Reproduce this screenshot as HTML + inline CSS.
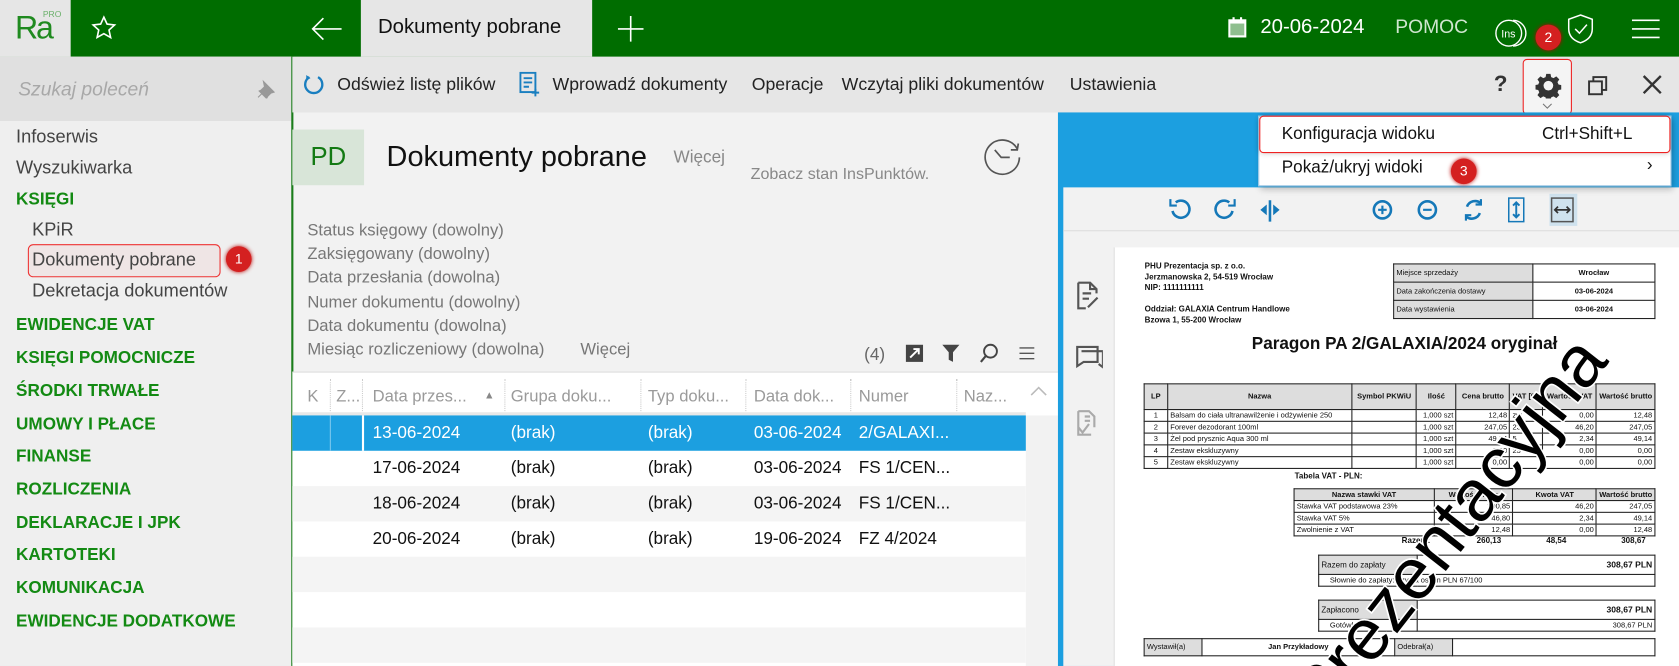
<!DOCTYPE html>
<html><head><meta charset="utf-8">
<style>
*{box-sizing:border-box;margin:0;padding:0}
html,body{width:1679px;height:666px;overflow:hidden;background:#fff}
body{font-family:"Liberation Sans","DejaVu Sans",sans-serif}
#w{position:absolute;left:0;top:0;width:1568px;height:622px;transform:scale(1.0708,1.0707);transform-origin:0 0;overflow:hidden;background:#f2f2f2}
.a{position:absolute;white-space:nowrap}
.g{color:#138a13;font-weight:bold;font-size:16px}
.s{font-size:17px;color:#444}
.tb{font-size:16.5px;color:#222}
.f{font-size:15.5px;color:#777}
.h{font-size:15.5px;color:#9a9a9a}
.r{font-size:16px;color:#111}
.d{font-size:7.5px;color:#111}
.badge{position:absolute;width:24px;height:24px;border-radius:50%;background:#d42020;color:#fff;font-size:13px;text-align:center;line-height:24px;box-shadow:0 0 4px #b00}
table.t{position:absolute;border-collapse:collapse;font-size:7px;color:#111}
table.t td{border:1px solid #222;padding:0 2px;height:11px}
table.t .hd td{background:#ddd;font-weight:bold;text-align:center}
</style></head><body><div id="w">
<!-- top bar -->
<div class="a" style="left:0;top:0;width:1568px;height:53px;background:#006d00"></div>
<div class="a" style="left:0;top:0;width:66px;height:53px;background:#e6e6e6"></div>
<div class="a" style="left:14px;top:10px;font-size:30px;color:#1f8a1f;letter-spacing:-2px">Ra</div>
<div class="a" style="left:40px;top:9px;font-size:8px;color:#6ab06a">PRO</div>
<svg class="a" style="left:85px;top:14px" width="24" height="24" viewBox="0 0 24 24"><path d="M12 2l3 6.5 7 .8-5.2 4.8 1.5 7L12 17.5 5.7 21l1.5-7L2 9.3l7-.8z" fill="none" stroke="#fff" stroke-width="1.5"/></svg>
<svg class="a" style="left:290px;top:16px" width="30" height="22"><path d="M2 11h27M12 1L2 11l10 10" fill="none" stroke="#fff" stroke-width="1.5"/></svg>
<div class="a" style="left:337px;top:0;width:216px;height:53px;background:#e6e6e6"></div>
<div class="a" style="left:353px;top:15px;font-size:19px;color:#111">Dokumenty pobrane</div>
<svg class="a" style="left:577px;top:15px" width="24" height="24"><path d="M12 0v24M0 12h24" stroke="#fff" stroke-width="1.5"/></svg>
<svg class="a" style="left:1147px;top:16px" width="17" height="19"><rect x="0" y="2" width="17" height="17" fill="#fff"/><rect x="2" y="6" width="13" height="11" fill="#8fbf8f"/><rect x="4" y="0" width="2" height="4" fill="#fff"/><rect x="11" y="0" width="2" height="4" fill="#fff"/></svg>
<div class="a" style="left:1177px;top:15px;font-size:19px;color:#fff">20-06-2024</div>
<div class="a" style="left:1303px;top:15px;font-size:18px;color:#cfe6cf">POMOC</div>
<svg class="a" style="left:1395px;top:16px" width="32" height="30"><circle cx="14" cy="15" r="12" fill="none" stroke="#fff" stroke-width="1.3"/><path d="M18 3a12 12 0 0 1 0 24" fill="none" stroke="#fff" stroke-width="1.3"/><text x="7" y="19" font-size="10" fill="#fff" font-family="Liberation Sans">Ins</text></svg>
<svg class="a" style="left:1463px;top:12px" width="26" height="30"><path d="M13 2l11 4v9c0 7-5 11-11 13C7 26 2 22 2 15V6z" fill="none" stroke="#fff" stroke-width="1.4"/><path d="M8 15l4 4 7-8" fill="none" stroke="#fff" stroke-width="1.4"/></svg>
<svg class="a" style="left:1524px;top:17px" width="26" height="20"><path d="M0 2h26M0 10h26M0 18h26" stroke="#fff" stroke-width="1.5"/></svg>
<div class="badge" style="left:1434px;top:23px">2</div>
<!-- sidebar -->
<div class="a" style="left:0;top:53px;width:272px;height:569px;background:#efefef"></div>
<div class="a" style="left:0;top:53px;width:272px;height:60px;background:#e0e0e0"></div>
<div class="a" style="left:17px;top:73px;font-size:18px;color:#a8a8a8;font-style:italic">Szukaj poleceń</div>
<svg class="a" style="left:240px;top:74px" width="18" height="18"><path d="M6 2l10 10-3 1-3 3-1 2L2 11l2-1 3-3zM5 13l-4 4" fill="#999" stroke="#999" stroke-width="1"/></svg>
<div class="a s" style="left:15px;top:118px">Infoserwis</div>
<div class="a s" style="left:15px;top:147px">Wyszukiwarka</div>
<div class="a g" style="left:15px;top:178px">KSIĘGI</div>
<div class="a s" style="left:30px;top:205px">KPiR</div>
<div class="a" style="left:26px;top:228px;width:180px;height:31px;border:1.5px solid #e33;border-radius:5px;background:rgba(240,200,200,.25)"></div>
<div class="a s" style="left:30px;top:233px">Dokumenty pobrane</div>
<div class="badge" style="left:211px;top:230px">1</div>
<div class="a s" style="left:30px;top:262px">Dekretacja dokumentów</div>
<div class="a g" style="left:15px;top:295px">EWIDENCJE VAT</div>
<div class="a g" style="left:15px;top:326px">KSIĘGI POMOCNICZE</div>
<div class="a g" style="left:15px;top:357px">ŚRODKI TRWAŁE</div>
<div class="a g" style="left:15px;top:388px">UMOWY I PŁACE</div>
<div class="a g" style="left:15px;top:418px">FINANSE</div>
<div class="a g" style="left:15px;top:449px">ROZLICZENIA</div>
<div class="a g" style="left:15px;top:480px">DEKLARACJE I JPK</div>
<div class="a g" style="left:15px;top:510px">KARTOTEKI</div>
<div class="a g" style="left:15px;top:541px">KOMUNIKACJA</div>
<div class="a g" style="left:15px;top:572px">EWIDENCJE DODATKOWE</div>
<div class="a" style="left:272px;top:53px;width:1.5px;height:569px;background:#1b7d1b"></div>
<!-- toolbar -->
<div class="a" style="left:273px;top:53px;width:1295px;height:52px;background:#e6e6e6"></div>
<svg class="a" style="left:283px;top:68px" width="20" height="22"><path d="M6 4A8 8 0 1 0 14 4" fill="none" stroke="#1a7fc0" stroke-width="2.2"/><path d="M3 2l4 3-4 2z" fill="#1a7fc0"/></svg>
<div class="a tb" style="left:315px;top:70px">Odśwież listę plików</div>
<svg class="a" style="left:485px;top:67px" width="20" height="24"><rect x="1" y="1" width="14" height="18" fill="none" stroke="#1a7fc0" stroke-width="1.8"/><path d="M4 6h8M4 10h8M4 14h5M15 16v7M11.5 19.5h7" stroke="#1a7fc0" stroke-width="1.8"/></svg>
<div class="a tb" style="left:516px;top:70px">Wprowadź dokumenty</div>
<div class="a tb" style="left:702px;top:70px">Operacje</div>
<div class="a tb" style="left:786px;top:70px">Wczytaj pliki dokumentów</div>
<div class="a tb" style="left:999px;top:70px">Ustawienia</div>
<div class="a" style="left:1395px;top:67px;font-size:21px;color:#333;font-weight:bold">?</div>
<div class="a" style="left:1422px;top:55px;width:46px;height:52px;border:1.5px solid #e22;border-radius:4px;background:#f4f4f4"></div>
<svg class="a" style="left:1434px;top:68px" width="24" height="24" viewBox="0 0 24 24"><path d="M10 1h4l.6 3 2.2 1 2.6-1.7 2.8 2.8-1.7 2.6 1 2.2 3 .6v4l-3 .6-1 2.2 1.7 2.6-2.8 2.8-2.6-1.7-2.2 1-.6 3h-4l-.6-3-2.2-1-2.6 1.7-2.8-2.8 1.7-2.6-1-2.2-3-.6v-4l3-.6 1-2.2-1.7-2.6 2.8-2.8 2.6 1.7 2.2-1z" fill="#333"/><circle cx="12" cy="12" r="4.5" fill="#f4f4f4"/></svg>
<svg class="a" style="left:1440px;top:96px" width="10" height="6"><path d="M1 1l4 4 4-4" fill="none" stroke="#777"/></svg>
<svg class="a" style="left:1482px;top:70px" width="20" height="20"><rect x="6" y="2" width="12" height="12" fill="none" stroke="#333" stroke-width="1.8"/><rect x="2" y="6" width="12" height="12" fill="#e6e6e6" stroke="#333" stroke-width="1.8"/></svg>
<svg class="a" style="left:1534px;top:70px" width="18" height="18"><path d="M1 1l16 16M17 1L1 17" stroke="#333" stroke-width="2.2"/></svg>
<!-- left panel header -->
<div class="a" style="left:273px;top:121px;width:67px;height:52px;background:#d8e5d8"></div>
<div class="a" style="left:290px;top:133px;font-size:24px;color:#137a13">PD</div>
<div class="a" style="left:361px;top:131px;font-size:27px;color:#111">Dokumenty pobrane</div>
<div class="a" style="left:629px;top:139px;font-size:16px;color:#888">Więcej</div>
<div class="a" style="left:701px;top:154px;font-size:15px;color:#888">Zobacz stan InsPunktów.</div>
<svg class="a" style="left:916px;top:127px" width="40" height="40"><path d="M34 12A16 16 0 1 0 36 20" fill="none" stroke="#555" stroke-width="1.6"/><path d="M28 13l6 0 1-6" fill="none" stroke="#555" stroke-width="1.6"/><path d="M13 13l6 7h8" fill="none" stroke="#555" stroke-width="1.6"/></svg>
<div class="a f" style="left:287px;top:207px">Status księgowy (dowolny)</div>
<div class="a f" style="left:287px;top:229px">Zaksięgowany (dowolny)</div>
<div class="a f" style="left:287px;top:251px">Data przesłania (dowolna)</div>
<div class="a f" style="left:287px;top:274px">Numer dokumentu (dowolny)</div>
<div class="a f" style="left:287px;top:296px">Data dokumentu (dowolna)</div>
<div class="a f" style="left:287px;top:318px">Miesiąc rozliczeniowy (dowolna)</div>
<div class="a f" style="left:542px;top:318px">Więcej</div>
<div class="a" style="left:807px;top:323px;font-size:16px;color:#666">(4)</div>
<svg class="a" style="left:845px;top:321px" width="18" height="18"><rect x="1" y="1" width="16" height="16" fill="#444"/><path d="M5 13l8-8M8 5h5v5" stroke="#fff" stroke-width="1.8" fill="none"/></svg>
<svg class="a" style="left:879px;top:321px" width="18" height="18"><path d="M1 1h16l-6 7v9l-4-2V8z" fill="#444"/></svg>
<svg class="a" style="left:914px;top:320px" width="20" height="20"><circle cx="11" cy="8" r="6" fill="none" stroke="#444" stroke-width="1.8"/><path d="M7 12l-5 6" stroke="#444" stroke-width="2"/></svg>
<svg class="a" style="left:952px;top:324px" width="14" height="12"><path d="M0 1h14M0 6h14M0 11h14" stroke="#555" stroke-width="1.3"/></svg>
<!-- grid -->
<div class="a" style="left:273px;top:347px;width:715px;height:275px;background:#fff;border-top:1px solid #ddd"></div>
<div class="a" style="left:273px;top:385px;width:685px;height:3px;background:#e8e8e8"></div>
<div class="a h" style="left:287px;top:362px">K</div>
<div class="a h" style="left:314px;top:362px">Z...</div>
<div class="a h" style="left:348px;top:362px">Data przes...</div>
<div class="a" style="left:452px;top:364px;font-size:10px;color:#888">▲</div>
<div class="a h" style="left:477px;top:362px">Grupa doku...</div>
<div class="a h" style="left:605px;top:362px">Typ doku...</div>
<div class="a h" style="left:704px;top:362px">Data dok...</div>
<div class="a h" style="left:802px;top:362px">Numer</div>
<div class="a h" style="left:900px;top:362px">Naz...</div>
<svg class="a" style="left:962px;top:360px" width="16" height="10"><path d="M1 9l7-7 7 7" fill="none" stroke="#bbb" stroke-width="1.5"/></svg>
<div class="a" style="left:308px;top:354px;height:30px;border-left:1px dotted #ccc"></div>
<div class="a" style="left:338px;top:354px;height:30px;border-left:1px dotted #ccc"></div>
<div class="a" style="left:471px;top:354px;height:30px;border-left:1px dotted #ccc"></div>
<div class="a" style="left:598px;top:354px;height:30px;border-left:1px dotted #ccc"></div>
<div class="a" style="left:696px;top:354px;height:30px;border-left:1px dotted #ccc"></div>
<div class="a" style="left:794px;top:354px;height:30px;border-left:1px dotted #ccc"></div>
<div class="a" style="left:893px;top:354px;height:30px;border-left:1px dotted #ccc"></div>
<div class="a" style="left:958px;top:388px;width:30px;height:234px;background:#f2f2f2"></div>
<div class="a" style="left:273px;top:388px;width:685px;height:33px;background:#1c9fe0"></div>
<div class="a" style="left:308px;top:388px;width:1px;height:33px;background:#7cc8ee"></div>
<div class="a" style="left:338px;top:388px;width:1.5px;height:33px;background:#fff"></div>
<div class="a" style="left:273px;top:454px;width:685px;height:33px;background:#f4f4f4"></div>
<div class="a" style="left:273px;top:520px;width:685px;height:33px;background:#f4f4f4"></div>
<div class="a" style="left:273px;top:586px;width:685px;height:33px;background:#f4f4f4"></div>
<div class="a r" style="left:348px;top:396px;color:#fff">13-06-2024</div>
<div class="a r" style="left:477px;top:396px;color:#fff">(brak)</div>
<div class="a r" style="left:605px;top:396px;color:#fff">(brak)</div>
<div class="a r" style="left:704px;top:396px;color:#fff">03-06-2024</div>
<div class="a r" style="left:802px;top:396px;color:#fff">2/GALAXI...</div>
<div class="a r" style="left:348px;top:429px">17-06-2024</div><div class="a r" style="left:477px;top:429px">(brak)</div><div class="a r" style="left:605px;top:429px">(brak)</div><div class="a r" style="left:704px;top:429px">03-06-2024</div><div class="a r" style="left:802px;top:429px">FS 1/CEN...</div>
<div class="a r" style="left:348px;top:462px">18-06-2024</div><div class="a r" style="left:477px;top:462px">(brak)</div><div class="a r" style="left:605px;top:462px">(brak)</div><div class="a r" style="left:704px;top:462px">03-06-2024</div><div class="a r" style="left:802px;top:462px">FS 1/CEN...</div>
<div class="a r" style="left:348px;top:495px">20-06-2024</div><div class="a r" style="left:477px;top:495px">(brak)</div><div class="a r" style="left:605px;top:495px">(brak)</div><div class="a r" style="left:704px;top:495px">19-06-2024</div><div class="a r" style="left:802px;top:495px">FZ 4/2024</div>
<!-- right panel -->
<div class="a" style="left:988px;top:105px;width:580px;height:517px;background:#1c9fe0"></div>
<div class="a" style="left:993px;top:175px;width:575px;height:447px;background:#f2f2f2"></div>
<div class="a" style="left:993px;top:215px;width:575px;height:1px;background:#ddd"></div>
<div class="a" style="left:1447px;top:181px;width:26px;height:30px;background:#cfe2ee"></div>
<svg class="a" style="left:1090px;top:183px" width="390" height="26" viewBox="0 0 390 26" fill="none" stroke="#1578b8" stroke-width="2.4">
<path d="M8 6a8 8 0 1 1-3 8"/><path d="M3 3v6h6" stroke-width="2"/>
<path d="M58 6a8 8 0 1 0 3 8"/><path d="M63 3v6h-6" stroke-width="2"/>
<path d="M96 4v20" stroke-width="2.4"/><path d="M93 8l-6 5 6 5z M99 8l6 5-6 5z" fill="#1578b8" stroke="none"/>
<circle cx="201" cy="13" r="8"/><path d="M197 13h8M201 9v8" stroke-width="2"/>
<circle cx="243" cy="13" r="8"/><path d="M239 13h8" stroke-width="2"/>
<path d="M293 7a8 8 0 0 0-13 3M279 19a8 8 0 0 0 13-3"/><path d="M293 3v5h-5M279 23v-5h5" stroke-width="2"/>
<rect x="319" y="2" width="14" height="22" stroke-width="1.4"/><path d="M326 6v14M323 9l3-3 3 3M323 17l3 3 3-3" stroke-width="1.8"/>
<rect x="359" y="2" width="20" height="22" stroke="#555" stroke-width="1.4"/><path d="M362 13h14M365 10l-3 3 3 3M373 10l3 3-3 3" stroke="#333" stroke-width="1.6"/>
</svg>
<svg class="a" style="left:1004px;top:262px" width="26" height="150" fill="none" stroke="#555" stroke-width="2">
<path d="M3 2h11l6 6v4M3 2v24h7M14 2v6h6M7 12h8M7 17h6M12 25l9-9"/>
<path d="M2 62h19v14H8l-6 4zM6 66h20v15l-4-3" />
<path d="M3 122h10l5 5v10M3 122v22h12M3 137l4 5 6-8M9 127h5M9 131h5" stroke="#aaa"/>
</svg>
<!-- document (clipped container) -->
<div class="a" style="left:1040px;top:231px;width:528px;height:391px;background:#fff;border-left:1px solid #ddd;overflow:hidden">
<div class="a d" style="left:28px;top:13px;font-weight:bold;line-height:10px">PHU Prezentacja sp. z o.o.<br>Jerzmanowska 2, 54-519 Wrocław<br>NIP: 1111111111<br><br>Oddział: GALAXIA Centrum Handlowe<br>Bzowa 1, 55-200 Wrocław</div>
<table class="t" style="left:260px;top:15px;width:245px"><tr><td style="background:#ddd;width:130px;height:17px">Miejsce sprzedaży</td><td style="text-align:center;font-weight:bold">Wrocław</td></tr><tr><td style="background:#ddd;height:17px">Data zakończenia dostawy</td><td style="text-align:center;font-weight:bold">03-06-2024</td></tr><tr><td style="background:#ddd;height:17px">Data wystawienia</td><td style="text-align:center;font-weight:bold">03-06-2024</td></tr></table>
<div class="a" style="left:128px;top:82px;font-size:16px;font-weight:bold;color:#111">Paragon PA 2/GALAXIA/2024 oryginał</div>
<table class="t" style="left:27px;top:127px;width:478px">
<tr class="hd"><td style="width:27px;height:24px">LP</td><td style="width:182px">Nazwa</td><td style="width:64px">Symbol PKWiU</td><td style="width:39px">Ilość</td><td style="width:54px">Cena brutto</td><td style="width:22px">VAT [%]</td><td style="width:52px">Wartość VAT</td><td>Wartość brutto</td></tr>
<tr><td align="center">1</td><td>Balsam do ciała ultranawilżenie i odżywienie 250</td><td></td><td align="right">1,000 szt</td><td align="right">12,48</td><td>zw</td><td align="right">0,00</td><td align="right">12,48</td></tr>
<tr><td align="center">2</td><td>Forever dezodorant 100ml</td><td></td><td align="right">1,000 szt</td><td align="right">247,05</td><td>23</td><td align="right">46,20</td><td align="right">247,05</td></tr>
<tr><td align="center">3</td><td>Żel pod prysznic Aqua 300 ml</td><td></td><td align="right">1,000 szt</td><td align="right">49,14</td><td>5</td><td align="right">2,34</td><td align="right">49,14</td></tr>
<tr><td align="center">4</td><td>Zestaw ekskluzywny</td><td></td><td align="right">1,000 szt</td><td align="right">0,00</td><td>23</td><td align="right">0,00</td><td align="right">0,00</td></tr>
<tr><td align="center">5</td><td>Zestaw ekskluzywny</td><td></td><td align="right">1,000 szt</td><td align="right">0,00</td><td></td><td align="right">0,00</td><td align="right">0,00</td></tr></table>
<div class="a d" style="left:168px;top:209px;font-weight:bold">Tabela VAT - PLN:</div>
<table class="t" style="left:167px;top:225px;width:338px">
<tr class="hd"><td style="width:134px">Nazwa stawki VAT</td><td style="width:76px">Wartość netto</td><td style="width:82px">Kwota VAT</td><td>Wartość brutto</td></tr>
<tr><td>Stawka VAT podstawowa 23%</td><td align="right">200,85</td><td align="right">46,20</td><td align="right">247,05</td></tr>
<tr><td>Stawka VAT 5%</td><td align="right">46,80</td><td align="right">2,34</td><td align="right">49,14</td></tr>
<tr><td>Zwolnienie z VAT</td><td align="right">12,48</td><td align="right">0,00</td><td align="right">12,48</td></tr></table>
<div class="a d" style="left:268px;top:269px;font-weight:bold">Razem:</div>
<div class="a d" style="left:338px;top:269px;font-weight:bold">260,13</div>
<div class="a d" style="left:403px;top:269px;font-weight:bold">48,54</div>
<div class="a d" style="left:473px;top:269px;font-weight:bold">308,67</div>
<table class="t" style="left:190px;top:287px;width:315px"><tr><td style="background:#ddd;width:92px;height:18px;font-size:7.5px">Razem do zapłaty</td><td align="right" style="font-weight:bold;font-size:8px">308,67 PLN</td></tr><tr><td colspan="2" style="padding-left:10px">Słownie do zapłaty: trzysta osiem PLN 67/100</td></tr></table>
<table class="t" style="left:190px;top:329px;width:315px"><tr><td style="background:#ddd;width:92px;height:18px;font-size:7.5px">Zapłacono</td><td align="right" style="font-weight:bold;font-size:8px">308,67 PLN</td></tr><tr><td style="padding-left:10px">Gotówka</td><td align="right">308,67 PLN</td></tr></table>
<table class="t" style="left:27px;top:365px;width:478px"><tr><td style="background:#ddd;width:54px;height:16px">Wystawił(a)</td><td align="center" style="width:180px;font-weight:bold">Jan Przykładowy</td><td style="background:#ddd;width:54px">Odebrał(a)</td><td></td></tr></table>
<svg class="a" style="left:0;top:0" width="528" height="391"><text x="0" y="0" transform="translate(197,446) rotate(-52)" font-family="Liberation Sans" font-size="68" fill="#000" stroke="#fff" stroke-width="3" paint-order="stroke">Prezentacyjna</text></svg>
</div>
<!-- dropdown menu -->
<div class="a" style="left:1175px;top:108px;width:386px;height:66px;background:#fff;border:1px solid #9cc6e4;box-shadow:2px 3px 6px rgba(0,0,0,.25)"></div>
<div class="a" style="left:1176px;top:108px;width:384px;height:35px;border:1.5px solid #e22;border-radius:4px;box-shadow:0 0 5px rgba(0,0,0,.2)"></div>
<div class="a" style="left:1197px;top:117px;font-size:16px;color:#111">Konfiguracja widoku</div>
<div class="a" style="left:1440px;top:117px;font-size:16px;color:#111">Ctrl+Shift+L</div>
<div class="a" style="left:1197px;top:148px;font-size:16px;color:#111">Pokaż/ukryj widoki</div>
<div class="a" style="left:1538px;top:146px;font-size:16px;color:#111">›</div>
<div class="badge" style="left:1355px;top:148px">3</div>
</div></body></html>
